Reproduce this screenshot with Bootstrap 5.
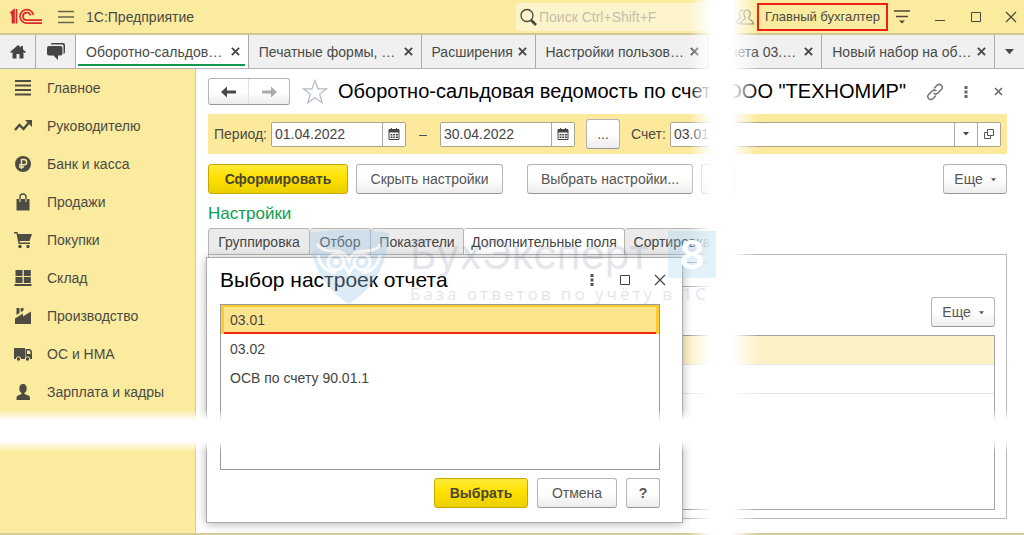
<!DOCTYPE html>
<html lang="ru">
<head>
<meta charset="utf-8">
<meta name="viewport" content="width=device-width, initial-scale=1">
<title>1С:Предприятие</title>
<link href="https://cdn.jsdelivr.net/npm/bootstrap@5.3.0/dist/css/bootstrap.min.css" rel="stylesheet">
<style>
:root{--cream:#fbeb9e;--ink:#4a4a46}
body{font-family:"Liberation Sans",Arial,sans-serif;font-size:14px;line-height:20px;color:var(--ink);background:#fff;overflow-x:hidden}
svg{display:block;flex:none}
button{font:inherit;color:inherit}
.plain{border:0;background:none;padding:0}
.topbar{height:33px;background:var(--cream);flex:none}
.tools{width:508px}
.search-box{background:#fdf4cc;height:28px;margin-top:1px;flex:1}
.search-box input{border:0;background:none;outline:0;padding:0 0 0 2px;min-width:0;color:#444}
.search-box input::placeholder{color:#c4bfa8;opacity:1}
.user-btn{border:2px solid #f11f13;background:none;height:28px;width:131px;font-size:13px;padding:0;margin:0 6px 0 3px;white-space:nowrap}
.win-btn{margin-left:26px}
.win-last{margin:0 7px 0 24px}
.open-tabs{height:36px;background:#f0f0f0;border-top:2px solid #d2c88f;border-bottom:1px solid #b4b4b4;flex:none}
.wtab{border-right:1px solid #a9a9a9;white-space:nowrap;position:relative}
.wtab>a{color:inherit;text-decoration:none}
.w-home{width:36px}.w-chat{width:40px}.w-more{width:29px}
.w-s{width:114px;padding:0 8px 0 10px}.w-l{flex:1 1 172px;max-width:400px;padding:0 8px 0 10px}
.wtab.current{background:#fff}
.wtab.current::after{content:"";position:absolute;left:2px;right:3px;bottom:2px;height:2px;background:#12984f}
.side{width:196px;background:var(--cream);border-right:1px solid #d6cb88;flex:none}
.side a{height:38px;padding-left:14px;gap:15px;color:var(--ink);text-decoration:none;display:flex;align-items:center}
.work{padding:9px 17px 14px 12px;min-width:0}
.b{height:30px;border:1px solid #b5b5b5;border-bottom-color:#999;border-radius:3px;background:linear-gradient(#fff 50%,#ececec);padding:0;flex:none;white-space:nowrap;color:#555}
.b-y{background:linear-gradient(#ffea38,#ffe100 45%,#ecce00);border-color:#c4a800;color:#4a4630;font-weight:700}
.w140{width:140px}.w147{width:147px}.w166{width:166px}.w94{width:94px}.w80{width:80px}.w64{width:64px}.w34{width:34px}
.row-gap{margin-top:10px}
.side-gap{margin-left:11px;margin-right:11px}
.dlg-btns{gap:9px}
.nav-pair{height:27px;width:82px;overflow:hidden}
.nav-pair button{width:50%;height:100%}
.star{margin:0 10px 0 12px}
.h-title{font-size:20px;line-height:27px;margin:0;font-weight:400;color:#000;white-space:nowrap}
.params{background:#fce99c;height:40px;padding:0 6px;margin-top:9px}
.fld{height:25px;border:1px solid #a8a38b;border-radius:2px;background:#fff;overflow:hidden}
.fld input{border:0;outline:0;padding:0 0 0 3px;min-width:0;flex:1;color:#444;height:100%}
.fld button{border:0;border-left:1px solid #aaa;background:#fff;width:23px;height:100%;padding:0;display:grid;place-items:center;flex:none}
.date{width:135px}
.lb-period{width:57px}.lb-acc{width:39px}.dash{width:34px}
.sect{font-size:17px;color:#109c50;line-height:20px;margin:10px 0 0;font-weight:400}
.ptab{height:27px;border:1px solid #b5b5b5;border-left-width:0;border-radius:3px 3px 0 0;background:#ebebeb;white-space:nowrap;color:#444;padding:0}
.ptab:first-child{border-left-width:1px}
.ptab.current{background:#fff;border-bottom-color:#fff}
.panel{border:1px solid #b8b8b8;margin-top:-1px;padding:7px 11px 8px;flex:1}
.panel .fld{width:490px;border-color:#b0b0b0}
.grid-box{border:1px solid #a2a2a6;flex:1}
.grid-box div{height:29px;border-bottom:1px solid #e4e4e4}
.grid-box div:first-child{background:#fdf1c6}
.dlg{position:absolute;left:10px;top:188px;width:477px;height:266px;background:#fff;border:1px solid #adadad;box-shadow:0 1px 9px rgba(0,0,0,.3);padding:8px 22px 14px 13px;z-index:3}
.dlg .h-title{font-size:21px;line-height:28px}
.dlg-x{margin-right:-6px}
.pick{border:1px solid #999;flex:1;margin-top:10px}
.pick button{height:29px;display:block;width:100%;text-align:left;border:0;background:#fff;padding:0 9px;color:#444}
.pick button.current{background:linear-gradient(#f32810,#f32810) bottom/100% 2px no-repeat,#ffe48e;box-shadow:inset 3px 0 #fdcb2c,inset -3px 0 #fdcb2c,inset 0 2px #fdcb2c}
.tear-v,.tear-h,.wmark{position:absolute;pointer-events:none}
.tear-v{left:67%;width:7%;top:0;bottom:0;z-index:4;background:linear-gradient(90deg,#fff0 4%,#ffffff90 20%,#fff 35%,#fff 64%,#ffffff90 80%,#fff0)}
.tear-h{left:0;right:0;top:410px;height:42px;z-index:5;background:linear-gradient(#fff0,#fff 24%,#fff 74%,#fff0)}
.wmark{left:309px;top:230px;z-index:6;color:#777d9a;font-family:"Open Sans",sans-serif}
.wm-text{margin-left:21px}
.wm-name{font-size:41px;line-height:48px;opacity:.19;width:258px;font-family:Inter,sans-serif}
.wm-sub{font-size:17px;line-height:24px;opacity:.2;letter-spacing:3px;white-space:nowrap}
.wm-eight{width:48px;height:47px;background:#9accec48;color:#fff;font:600 40px/47px Inter,sans-serif;text-align:center;margin-top:1px}
.foot{height:2px;background:#d6cc98}
</style>
</head>
<body class="d-flex flex-column min-vh-100 position-relative">
<svg width="0" height="0" class="position-absolute"><defs>
<symbol id="x" viewBox="0 0 10 10"><path d="M1 1l8 8M9 1L1 9" stroke="currentColor" stroke-width="2.200" fill="none"/></symbol>
<symbol id="thinx" viewBox="0 0 12 12"><path d="M1 1l10 10M11 1L1 11" stroke="currentColor" stroke-width="1.2" fill="none"/></symbol>
<symbol id="boldx" viewBox="0 0 9 9"><path d="M1 1l7 7M8 1L1 8" stroke="currentColor" stroke-width="1.5" fill="none"/></symbol>
<symbol id="dots" viewBox="0 0 4 14"><path d="M0.5 1h3v3h-3zM0.5 5.5h3v3h-3zM0.5 10h3v3h-3z" fill="currentColor"/></symbol>
<symbol id="dn" viewBox="0 0 6 4"><path d="M0 0h6L3 3.5z" fill="currentColor"/></symbol>
<symbol id="cal" viewBox="0 0 12 12"><path d="M1 1.5h10v10H1z" fill="none" stroke="#444"/><path d="M1 2h10v2.500H1zM3 0h1v2H3zM8 0h1v2H8z" fill="#444"/><path d="M2.500 6h2v1.500h-2zM5.200 6h2v1.500h-2zM8 6h2v1.500H8zM2.500 8.500h2V10h-2zM5.200 8.500h2V10h-2zM8 8.500h2V10H8z" fill="#444"/></symbol>
</defs></svg>

<header class="topbar d-flex align-items-center">
  <svg class="ms-2" width="34" height="18" viewBox="0 0 34 18" fill="none" stroke="#dc2a2c" stroke-width="1.700"><path d="M2.500 5L6 2V15.500M3 7.500h.5M8.500 1v14.500M2.500 5.500l2-1V15.500"/><path d="M25.500 7A6.800 6.800 0 1 0 19 15.200H34.500"/><path d="M22.500 7.500A3.800 3.800 0 1 0 19 12.200H34.500"/></svg>
  <button class="plain ms-3" aria-label="Меню"><svg width="16" height="14" stroke="#67634d" stroke-width="1.400"><path d="M0 1.500h16M0 7h16M0 12.500h16"/></svg></button>
  <span class="ms-2 ps-1">1С:Предприятие</span>
  <div class="tools ms-auto d-flex align-items-center h-100">
    <label class="search-box d-flex align-items-center ps-1 rounded-1"><svg width="17" height="18" fill="none" stroke="#4a473c"><circle cx="7" cy="7.500" r="6" stroke-width="1.300"/><path d="M11 12l5 5" stroke-width="2.600"/></svg><input type="search" placeholder="Поиск Ctrl+Shift+F" aria-label="Поиск"></label>
    <button class="plain" aria-label="Пользователь"><svg width="19" height="18" fill="none" stroke="#777463" stroke-width="1.200"><path d="M8.500 2.500c-3-1-4.500 1-4 4 .4 2 1.500 2 1 3.500C4.500 11.500 1 11.500 1 15h4"/><path d="M12 2c-2.500 0-3.500 2-3 4.500.4 2 1.500 2.500 1 4-.8 1.800-4 1.500-4.500 5.500h13c-.5-4-3.700-3.700-4.500-5.500-.5-1.500.6-2 1-4 .5-2.500-.5-4.500-3-4.500z"/></svg></button>
    <button class="user-btn">Главный бухгалтер</button>
    <button class="plain" aria-label="Сервис"><svg width="17" height="16" stroke="#4a473c" stroke-width="1.400"><path d="M0 2h16M2 7.500h12"/><path d="M5 11.500h6l-3 3z" fill="#4a473c" stroke="none"/></svg></button>
    <button class="plain ms-4" aria-label="Свернуть"><svg width="10" height="10"><path d="M0 8.500h10" stroke="#4a473c"/></svg></button>
    <button class="plain win-btn" aria-label="Развернуть"><svg width="10" height="10" fill="none" stroke="#4a473c"><path d="M.5.5h9v9h-9z"/></svg></button>
    <button class="plain win-last" aria-label="Закрыть"><svg width="12" height="12" color="#4a473c"><use href="#thinx"/></svg></button>
  </div>
</header>

<nav class="open-tabs d-flex">
  <div class="wtab w-home d-flex align-items-center justify-content-center"><a href="#" aria-label="Домой"><svg width="16" height="14" fill="#444"><path d="M8 0L0 7l1.200 1L2.500 7v6.500h4V9h3v4.500h4V7l1.300 1L16 7l-3-2.600V1h-2v1.600z"/></svg></a></div>
  <div class="wtab w-chat d-flex align-items-center justify-content-center"><a href="#" aria-label="Обсуждения"><svg width="18" height="17" fill="#444"><path d="M5 0h11q2 0 2 2v7q0 1.500-1.500 2V3q0-1.500-1.500-1.500H3.500Q4 0 5 0z"/><path d="M2 3h11.500q2 0 2 2v5.500q0 2-2 2H11V17l-4.500-4.500H2q-2 0-2-2V5q0-2 2-2z"/></svg></a></div>
  <div class="wtab w-l current d-flex align-items-center"><a href="#" class="flex-grow-1">Оборотно-сальдов…</a><button class="plain" aria-label="Закрыть"><svg width="9" height="9"><use href="#x"/></svg></button></div>
  <div class="wtab w-l d-flex align-items-center"><a href="#" class="flex-grow-1">Печатные формы, …</a><button class="plain" aria-label="Закрыть"><svg width="9" height="9"><use href="#x"/></svg></button></div>
  <div class="wtab w-s d-flex align-items-center"><a href="#" class="flex-grow-1">Расширения</a><button class="plain" aria-label="Закрыть"><svg width="9" height="9"><use href="#x"/></svg></button></div>
  <div class="wtab w-l d-flex align-items-center"><a href="#" class="flex-grow-1">Настройки пользов…</a><button class="plain" aria-label="Закрыть"><svg width="9" height="9"><use href="#x"/></svg></button></div>
  <div class="wtab w-s d-flex align-items-center"><a href="#" class="flex-grow-1 text-end me-2">чета 03.…</a><button class="plain" aria-label="Закрыть"><svg width="9" height="9"><use href="#x"/></svg></button></div>
  <div class="wtab w-l d-flex align-items-center"><a href="#" class="flex-grow-1">Новый набор на об…</a><button class="plain" aria-label="Закрыть"><svg width="9" height="9"><use href="#x"/></svg></button></div>
  <button class="plain w-more d-flex align-items-center justify-content-center" aria-label="Все вкладки"><svg width="9" height="6"><use href="#dn"/></svg></button>
</nav>

<div class="d-flex flex-grow-1">
  <aside class="side">
    <a href="#"><svg width="18" height="18" stroke="#4d4b42" stroke-width="2"><path d="M1 2h16M1 6.500h16M1 11h16M1 15.500h16"/></svg>Главное</a>
    <a href="#"><svg width="18" height="18" fill="none" stroke="#4d4b42" stroke-width="2.400"><path d="M1 13l4.500-5 4 4L15 5.500"/><path d="M11 3h7v7z" fill="#4d4b42" stroke="none"/></svg>Руководителю</a>
    <a href="#"><svg width="18" height="18"><circle cx="9" cy="9" r="8" fill="#4d4b42"/><path d="M7.500 14V4.500H10a2.500 2.500 0 0 1 0 5.300H5M5 12h5" fill="none" stroke="#fbeb9e" stroke-width="1.400"/></svg>Банк и касса</a>
    <a href="#"><svg width="18" height="18"><path d="M2.500 6h13v11.500h-13z" fill="#4d4b42"/><path d="M6 9V4q0-3 3-3t3 3v5" fill="none" stroke="#4d4b42" stroke-width="1.400"/><path d="M6 6v3M12 6v3" stroke="#fbeb9e"/></svg>Продажи</a>
    <a href="#"><svg width="18" height="18" fill="#4d4b42"><path d="M0 1h3.500l.5 2h14l-2.500 7H5.500l.3 1.500H16V13H4.500L2.500 2.500H0z"/><circle cx="6" cy="15.500" r="1.700"/><circle cx="14" cy="15.500" r="1.700"/></svg>Покупки</a>
    <a href="#"><svg width="18" height="18" fill="#4d4b42"><path d="M1.500 1h7v6h-7zM9.800 1h7v6h-7zM1.500 8h7v6h-7zM9.800 8h7v6h-7zM.5 15h17v2H.5z"/></svg>Склад</a>
    <a href="#"><svg width="18" height="18" fill="#4d4b42"><path d="M1 17V11.500L9 6.500v3L17 4.500V17zM2.500 1h3v5l-3 2zM6.700 1h2.800v2.500L6.700 5.300z"/></svg>Производство</a>
    <a href="#"><svg width="18" height="18" fill="#4d4b42"><path fill-rule="evenodd" d="M0 3h11v11H0zM11.500 4H15q3 0 3 4v6h-6.500zM13 5.500v3.500h3.500Q16.500 5.500 15 5.500z"/><circle cx="4.500" cy="14" r="2.200" stroke="#fbeb9e"/><circle cx="13.500" cy="14" r="2.200" stroke="#fbeb9e"/></svg>ОС и НМА</a>
    <a href="#"><svg width="18" height="18" fill="#4d4b42"><ellipse cx="9" cy="5.500" rx="3.700" ry="4.500"/><path d="M7.500 9h3v2l5 2q.5.500.5 4H2.500q0-3.500.5-4l4.500-2z"/></svg>Зарплата и кадры</a>
  </aside>

  <main class="work flex-grow-1 d-flex flex-column position-relative">
    <div class="d-flex align-items-center">
      <div class="b nav-pair d-flex">
        <button class="plain border-end d-grid align-items-center justify-content-center" aria-label="Назад"><svg width="15" height="12"><path d="M0 6l6-5.500V4.500h9v3H6v4z" fill="#484848"/></svg></button>
        <button class="plain d-grid align-items-center justify-content-center" aria-label="Вперед"><svg width="15" height="12"><path d="M15 6L9 .5V4.500H0v3h9v4z" fill="#aaa"/></svg></button>
      </div>
      <button class="plain star" aria-label="В избранное"><svg width="26" height="26" fill="none" stroke="#b3bac4" stroke-width="1.200"><path d="M13 1.500l3 8.300h8.500l-6.800 5.300 2.500 8.700L13 18.700l-7.200 5.100 2.500-8.700L1.500 9.800H10z"/></svg></button>
      <h1 class="h-title">Оборотно-сальдовая ведомость по счет</h1>
      <span class="h-title ms-auto">ООО "ТЕХНОМИР"</span>
      <button class="plain ms-3 ps-1" aria-label="Ссылка"><svg width="18" height="18" fill="none" stroke="#777" stroke-width="1.500"><path d="M8 5.500l3-3.200q2.200-1.800 4.300 0 2 2.200 0 4.300l-3.500 3.500q-2.200 1.800-4.300 0"/><path d="M10 12.500l-3 3.200q-2.200 1.800-4.300 0-2-2.200 0-4.300L6.200 8q2.200-1.800 4.300 0"/></svg></button>
      <button class="plain ms-3 ps-1" aria-label="Меню формы"><svg width="4" height="14" color="#666"><use href="#dots"/></svg></button>
      <button class="plain win-btn me-1" aria-label="Закрыть форму"><svg width="9" height="9" color="#666"><use href="#boldx"/></svg></button>
    </div>

    <div class="params d-flex align-items-center">
      <label for="d1" class="lb-period">Период:</label>
      <div class="fld date d-flex"><input id="d1" value="01.04.2022"><button aria-label="Календарь"><svg width="12" height="12"><use href="#cal"/></svg></button></div>
      <span class="text-center dash">–</span>
      <div class="fld date d-flex"><input aria-label="Конец периода" value="30.04.2022"><button aria-label="Календарь"><svg width="12" height="12"><use href="#cal"/></svg></button></div>
      <button class="b w34 side-gap">...</button>
      <label for="acc" class="lb-acc">Счет:</label>
      <div class="fld d-flex flex-grow-1"><input id="acc" value="03.01"><button aria-label="Список"><svg width="6" height="4"><use href="#dn"/></svg></button><button aria-label="Открыть"><svg width="12" height="12" fill="none" stroke="#555"><path d="M4.500 1.500h6v6h-6zM4.500 4.500h-3v6h6v-3"/></svg></button></div>
    </div>

    <div class="d-flex row-gap">
      <button class="b b-y w140">Сформировать</button>
      <button class="b w147 ms-2">Скрыть настройки</button>
      <button class="b w166 ms-4">Выбрать настройки...</button>
      <button class="b w34 ms-2" aria-label="Сохранить"></button>
      <button class="b w64 ms-auto">Еще <svg class="d-inline-block ms-1" width="5" height="4"><use href="#dn"/></svg></button>
    </div>

    <h2 class="sect">Настройки</h2>
    <div class="d-flex pt-1" role="tablist">
      <button role="tab" class="ptab" style="width:102px">Группировка</button>
      <button role="tab" class="ptab" style="width:61px">Отбор</button>
      <button role="tab" class="ptab" style="width:93px">Показатели</button>
      <button role="tab" class="ptab current" style="width:161px">Дополнительные поля</button>
      <button role="tab" class="ptab" style="width:95px">Сортировка</button>
    </div>
    <div class="panel d-flex flex-column">
      <div class="fld d-flex"><input aria-label="Поле"></div>
      <button class="b w64 align-self-end row-gap">Еще <svg class="d-inline-block ms-1" width="5" height="4"><use href="#dn"/></svg></button>
      <div class="grid-box mt-2"><div></div><div></div></div>
    </div>

    <section class="dlg d-flex flex-column" role="dialog" aria-labelledby="dt">
      <div class="d-flex align-items-center">
        <h2 class="h-title me-auto" id="dt">Выбор настроек отчета</h2>
        <button class="plain" aria-label="Меню"><svg width="4" height="14" color="#555"><use href="#dots"/></svg></button>
        <button class="plain win-btn" aria-label="Развернуть"><svg width="10" height="10" fill="none" stroke="#444"><path d="M.5.5h9v9h-9z"/></svg></button>
        <button class="plain dlg-x ms-4" aria-label="Закрыть"><svg width="12" height="12" color="#444"><use href="#thinx"/></svg></button>
      </div>
      <div class="pick"><button class="current">03.01</button><button>03.02</button><button>ОСВ по счету 90.01.1</button></div>
      <div class="dlg-btns d-flex justify-content-end pt-2">
        <button class="b b-y w94">Выбрать</button><button class="b w80">Отмена</button><button class="b w34 fw-bold">?</button>
      </div>
    </section>
  </main>
</div>
<footer class="foot"></footer>

<div class="tear-v"></div>
<div class="tear-h"></div>
<div class="wmark d-flex">
  <svg width="80" height="74" viewBox="0 0 80 74" opacity=".5"><path d="M0 3Q40-4 80 3 78 50 40 74 2 50 0 3z" fill="#9cc8e8" fill-opacity=".7"/><g fill="none" stroke="#fff" stroke-width="3"><circle cx="27" cy="32" r="8"/><circle cx="53" cy="32" r="8"/><path d="M8 14q5 8 19 7 10 1 13 10 3-9 13-10 14 1 19-7M9 25q3 16 18 18M71 25q-3 16-18 18M36 36l4 8 4-8"/></g><circle cx="27" cy="32" r="3" fill="#fff"/><circle cx="53" cy="32" r="3" fill="#fff"/></svg>
  <div class="wm-text"><div class="d-flex"><div class="wm-name">БухЭксперт</div><div class="wm-eight">8</div></div><div class="wm-sub mt-1">База ответов по учёту в 1С</div></div>
</div>
<script src="https://cdn.jsdelivr.net/npm/bootstrap@5.3.0/dist/js/bootstrap.bundle.min.js"></script>
</body>
</html>
